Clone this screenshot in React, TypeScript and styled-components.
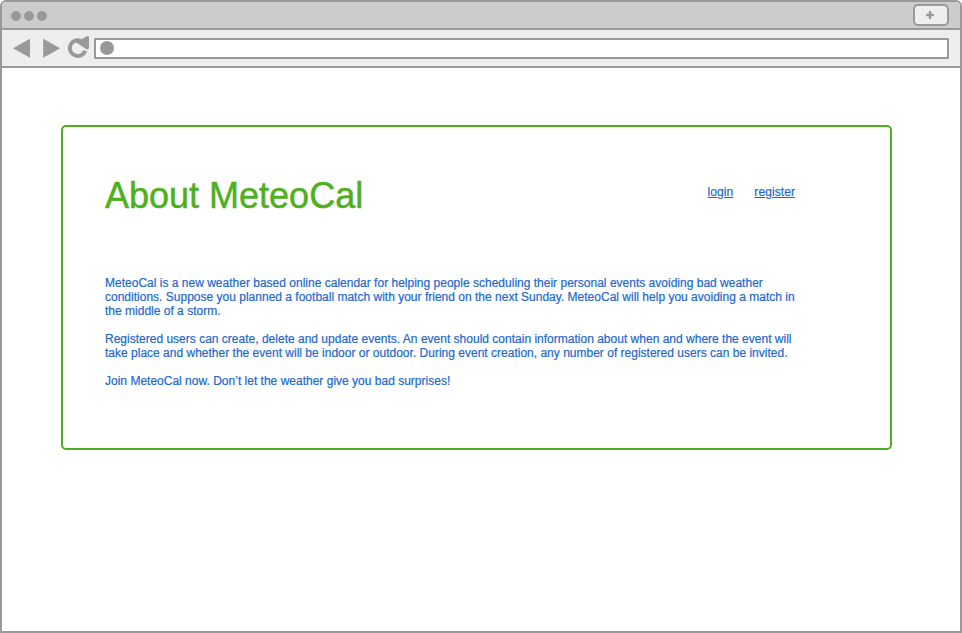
import React from "react";
import styled, { createGlobalStyle } from "styled-components";

const LINE = "#999999";
const GREEN = "#4fb01f";
const BLUE = "#2268cc";

const GlobalStyle = createGlobalStyle`
  *, *::before, *::after { box-sizing: border-box; }
  body {
    margin: 0;
    background: #ffffff;
    font-family: "Liberation Sans", Arial, sans-serif;
  }
`;

const BrowserWindow = styled.div`
  display: flex;
  flex-direction: column;
  width: 962px;
  height: 633px;
  border: 2px solid ${LINE};
  border-radius: 6px 6px 0 0;
  background: #ffffff;
  overflow: hidden;
`;

const TitleBar = styled.header`
  display: flex;
  justify-content: space-between;
  flex: none;
  height: 28px;
  padding: 2px 11px 0 9px;
  background: #cccccc;
  border-bottom: 2px solid ${LINE};
`;

const WindowDots = styled.div`
  display: flex;
  gap: 3px;
  padding-top: 7px;
`;

const Dot = styled.span<{ $size: number }>`
  flex: none;
  width: ${({ $size }) => $size}px;
  height: ${({ $size }) => $size}px;
  border-radius: 50%;
  background: ${LINE};
`;

const NewTabButton = styled.button`
  display: flex;
  align-items: center;
  justify-content: center;
  width: 36px;
  height: 22px;
  padding: 0 2px 0 0;
  border: 2px solid ${LINE};
  border-radius: 5px;
  background: #eeeeee;
`;

const Toolbar = styled.nav`
  display: flex;
  align-items: center;
  flex: none;
  height: 38px;
  padding: 0 11px 0 10px;
  background: #eeeeee;
  border-bottom: 2px solid ${LINE};
`;

const ToolbarIcons = styled.svg`
  display: block;
  flex: none;
  width: 82px;
  height: 36px;
`;

const AddressBar = styled.div`
  display: flex;
  align-items: flex-start;
  flex: 1;
  height: 21px;
  margin-top: 1px;
  padding: 1px 0 0 4px;
  border: 2px solid ${LINE};
  border-radius: 1px;
  background: #ffffff;
`;

const Page = styled.main`
  flex: 1;
  padding: 57px 68px 0 59px;
`;

const Card = styled.section`
  height: 325px;
  padding: 48px 95px 0 42px;
  border: 2px solid ${GREEN};
  border-radius: 5px;
`;

const CardHeader = styled.div`
  display: flex;
  justify-content: space-between;
  height: 101px;
`;

const Title = styled.h1`
  margin: 0;
  color: ${GREEN};
  font-size: 36px;
  font-weight: 400;
  line-height: 42px;
  white-space: nowrap;
  -webkit-text-stroke: 0.5px ${GREEN};
`;

const Links = styled.div`
  display: flex;
  gap: 21px;
  padding-top: 10px;
`;

const Link = styled.a`
  color: ${BLUE};
  font-size: 12px;
  line-height: 14px;
  letter-spacing: 0.08px;
  text-decoration: underline;
  -webkit-text-stroke: 0.2px ${BLUE};
`;

const Copy = styled.div`
  display: flex;
  flex-direction: column;
  gap: 14px;
`;

const Paragraph = styled.p`
  margin: 0;
  color: ${BLUE};
  font-size: 12px;
  line-height: 14px;
  letter-spacing: 0.006px;
  white-space: nowrap;
  -webkit-text-stroke: 0.2px ${BLUE};
`;

export default function App() {
  return (
    <>
      <GlobalStyle />
      <BrowserWindow>
        <TitleBar>
          <WindowDots>
            <Dot $size={10} />
            <Dot $size={10} />
            <Dot $size={10} />
          </WindowDots>
          <NewTabButton aria-label="New tab">
            <svg width="8" height="8" viewBox="0 0 8 8">
              <path d="M4 0V8M0 4H8" stroke={LINE} strokeWidth="2.4" />
            </svg>
          </NewTabButton>
        </TitleBar>
        <Toolbar>
          <ToolbarIcons viewBox="12 30 82 36" aria-hidden="true">
            <path d="M13 48.2L30 38.7V57.7Z" fill={LINE} />
            <path d="M60.2 48.2L43.2 38.7V57.7Z" fill={LINE} />
            <path
              d="M80.8 40.9A8 7.8 0 1 0 85.3 50.8"
              fill="none"
              stroke={LINE}
              strokeWidth="4"
            />
            <path d="M76 42.2L87 36.3Q89 35.4 89 37.4V47.8Q88.8 50.3 86.5 49.3Z" fill={LINE} />
          </ToolbarIcons>
          <AddressBar>
            <Dot $size={14} />
          </AddressBar>
        </Toolbar>
        <Page>
          <Card>
            <CardHeader>
              <Title>About MeteoCal</Title>
              <Links>
                <Link href="#login">login</Link>
                <Link href="#register">register</Link>
              </Links>
            </CardHeader>
            <Copy>
              <Paragraph>
                MeteoCal is a new weather based online calendar for helping people scheduling their personal events avoiding bad weather
                <br />
                conditions. Suppose you planned a football match with your friend on the next Sunday. MeteoCal will help you avoiding a match in
                <br />
                the middle of a storm.
              </Paragraph>
              <Paragraph>
                Registered users can create, delete and update events. An event should contain information about when and where the event will
                <br />
                take place and whether the event will be indoor or outdoor. During event creation, any number of registered users can be invited.
              </Paragraph>
              <Paragraph>Join MeteoCal now. Don’t let the weather give you bad surprises!</Paragraph>
            </Copy>
          </Card>
        </Page>
      </BrowserWindow>
    </>
  );
}
